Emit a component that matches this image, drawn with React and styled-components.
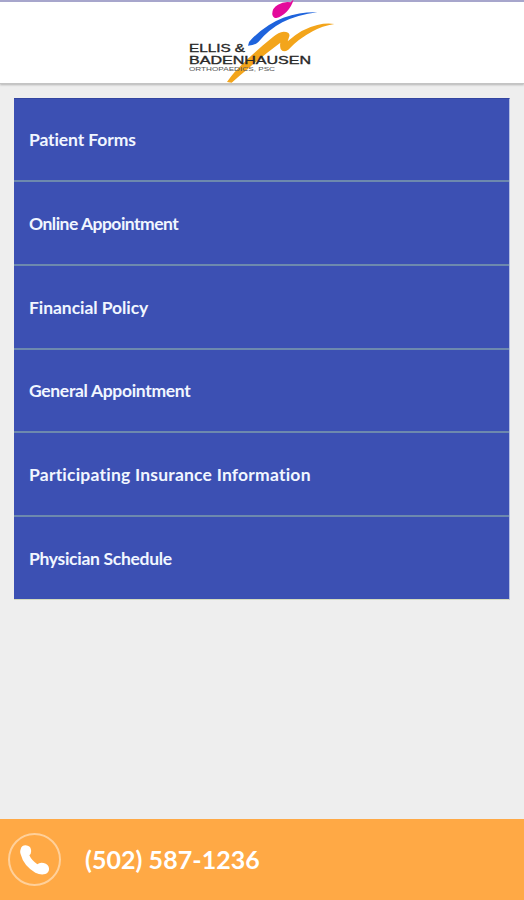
import React from 'react';
import styled, { createGlobalStyle } from 'styled-components';

const GlobalStyle = createGlobalStyle`
  * {
    box-sizing: border-box;
  }
  body {
    margin: 0;
    background-color: #eeeeee;
    font-family: Lato, 'Open Sans', sans-serif;
    font-variant-ligatures: none;
  }
`;

const Screen = styled.div`
  display: flex;
  flex-direction: column;
  height: 100vh;
  overflow: hidden;
  background-color: #eeeeee;
`;

const Header = styled.header`
  flex: none;
  display: flex;
  height: 84px;
  padding-left: 180px;
  border-top: 2px solid #a7a6cc;
  border-bottom: 1px solid #c4c4c4;
  background-color: #ffffff;
  box-shadow: 0 1px 2px rgba(0, 0, 0, 0.25);

  svg {
    display: block;
    width: 165px;
    height: 84px;
    margin-top: -2px;
    overflow: visible;
  }
`;

const Menu = styled.nav`
  flex: 1;
  padding: 14px 14px 0;
`;

const MenuList = styled.ul`
  margin: 0;
  padding: 0;
  list-style: none;
  background-color: #3c50b3;
  border-top: 1px solid #3345a0;
  border-bottom: 1px solid #d5dabf;
  border-right: 1px solid #b4bee2;
  width: 496px;
`;

const MenuItem = styled.li`
  display: flex;
  align-items: center;
  height: 81.2px;
  padding: 0 15px;
  color: #f1f6ff;
  font-size: 17.5px;
  font-weight: 700;
  white-space: nowrap;
  letter-spacing: ${props => props.$spacing}px;

  & + & {
    height: 83.7px;
    border-top: 2px solid #6d89ae;
    padding-top: 1px;
  }
`;

const CallBar = styled.footer`
  flex: none;
  display: flex;
  align-items: center;
  height: 81px;
  padding-left: 8px;
  background-color: #ffa945;
  color: #ffffff;
`;

const PhoneCircle = styled.span`
  display: flex;
  align-items: center;
  justify-content: center;
  width: 53px;
  height: 53px;
  border: 2px solid #ffd09a;
  border-radius: 50%;
`;

const PhoneNumber = styled.span`
  margin-left: 24px;
  padding-bottom: 2px;
  font-size: 25px;
  font-weight: 700;
  white-space: nowrap;
  letter-spacing: 0.05px;
`;

const items = [
  { label: 'Patient Forms', spacing: -0.1 },
  { label: 'Online Appointment', spacing: -0.52 },
  { label: 'Financial Policy', spacing: -0.06 },
  { label: 'General Appointment', spacing: -0.32 },
  { label: 'Participating Insurance Information', spacing: 0.22 },
  { label: 'Physician Schedule', spacing: -0.3 },
];

const Logo = () => (
  <svg viewBox="0 0 495 252" fontFamily="'Liberation Sans', sans-serif" fill="#282828">
    <text x="27" y="156" fontSize="31" stroke="#282828" textLength="168" lengthAdjust="spacingAndGlyphs">ELLIS &amp;</text>
    <path d="M141 246 C160 216 202 174 278 112 Q296 96 311 95 Q331 95 328 109 L323 124 Q366 85 412 75 Q440 68 463 72 Q426 78 398 94 Q355 117 325 149 Q309 159 302 147 Q299 137 301 128 Q251 165 204 206 Q177 228 155 248 Z" fill="#f3a51b" />
    <path d="M204 137 Q206 124 217 115 Q260 72 310 53 Q365 35 412 37 Q354 44 307 67 Q267 88 235 126 Q225 137 204 137 Z" fill="#1e63dc" />
    <path d="M277 44 Q275 25 294 14 Q311 4 332 7 L341 -2 Q335 20 320 35 Q305 50 289 54 Q280 54 277 44 Z" fill="#e40a9b" />
    <text x="27" y="192" fontSize="32" stroke="#282828" textLength="366" lengthAdjust="spacingAndGlyphs">BADENHAUSEN</text>
    <text x="27" y="214" fontSize="17" fill="#555555" textLength="258" lengthAdjust="spacingAndGlyphs">ORTHOPAEDICS, PSC</text>
  </svg>
);

const PhoneIcon = () => (
  <svg width="31" height="31" viewBox="0 0 93 93">
    <path
      d="M5 16 Q7 4 20 4 Q34 5 36 17 Q38 28 31 34 Q38 49 55 61 Q62 54 74 57 Q89 61 90 73 Q91 85 79 90 Q65 94 49 86 Q14 66 5 31 Q2 23 5 16 Z"
      fill="#ffffff"
    />
  </svg>
);

const App = () => (
  <Screen>
    <GlobalStyle />
    <Header>
      <Logo />
    </Header>
    <Menu>
      <MenuList>
        {items.map(item => (
          <MenuItem key={item.label} $spacing={item.spacing}>{item.label}</MenuItem>
        ))}
      </MenuList>
    </Menu>
    <CallBar>
      <PhoneCircle>
        <PhoneIcon />
      </PhoneCircle>
      <PhoneNumber>(502) 587-1236</PhoneNumber>
    </CallBar>
  </Screen>
);

export default App;
